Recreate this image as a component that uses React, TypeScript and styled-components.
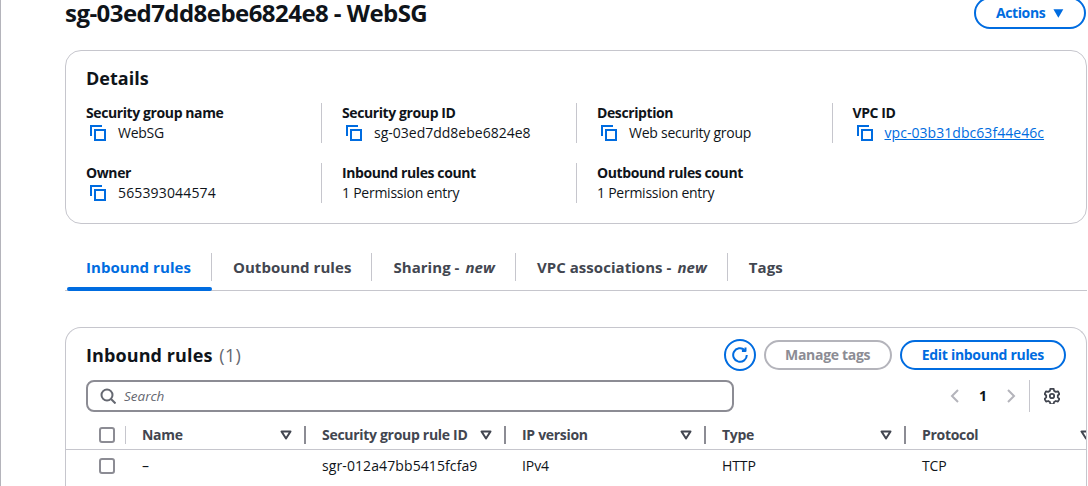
import React from "react"
import styled, {createGlobalStyle} from "styled-components"

const GlobalStyle = createGlobalStyle`
  html, body {
    margin: 0;
    padding: 0;
    background: #fff;
    overflow: hidden;
  }
  * { box-sizing: border-box; }
`

const BLUE = "#006ce0"
const INK = "#0f141a"
const GREY_INK = "#424650"

const Page = styled.div`
  width: 1088px;
  height: 486px;
  overflow: hidden;
  border-left: 1px solid #b4b4bb;
  padding: 0 1px 0 64px;
  font-family: "Open Sans", "Noto Sans", sans-serif;
  font-size: 14px;
  line-height: 20px;
  color: ${INK};
  display: flex;
  flex-direction: column;
`
const Header = styled.div`
  display: flex;
  justify-content: space-between;
  align-items: center;
  height: 32px;
  margin-top: -3px;
  flex: none;
`
const Title = styled.h1`
  margin: 0;
  font-size: 24px;
  line-height: 24px;
  font-weight: 700;
  letter-spacing: -0.55px;
`
const PillButton = styled.button<{$disabled?: boolean}>`
  height: 30px;
  padding: 0 ${({$disabled}) => $disabled ? "19.5px" : "20px"};
  border-radius: 15px;
  border: 2px solid ${({$disabled}) => $disabled ? "#b4b4bb" : BLUE};
  background: #fff;
  color: ${({$disabled}) => $disabled ? "#8c8c94" : BLUE};
  font: 700 14px/20px "Open Sans", sans-serif;
  letter-spacing: -0.3px;
  display: flex;
  align-items: center;
  gap: 8px;
  white-space: nowrap;
`
const ActionsButton = styled(PillButton)`
  height: 32px;
  border-radius: 16px;
  width: 112px;
  margin-right: 1px;
  justify-content: center;
  letter-spacing: -0.4px;
`
const Card = styled.section`
  border: 1px solid #c6c6cd;
  border-radius: 16px;
  background: #fff;
  flex: none;
`
const DetailsCard = styled(Card)`
  margin-top: 21px;
  height: 174px;
  padding: 15px 20px 0;
`
const CardTitle = styled.h2`
  margin: 0;
  font-size: 18px;
  line-height: 24px;
  font-weight: 700;
`
const RulesTitle = styled(CardTitle)`
  letter-spacing: 0.1px;
  margin-top: -1px;
`
const DetailGrid = styled.div`
  margin-top: 13px;
  display: grid;
  grid-template-columns: 235px 255px 255.5px 1fr;
  grid-auto-rows: 40px;
  row-gap: 20px;
`
const DetailCell = styled.div<{$first?: boolean}>`
  ${({$first}) => $first ? "" : "border-left: 1px solid #c6c6cd; padding-left: 20px;"}
`
const Label = styled.div`
  font-weight: 700;
  letter-spacing: -0.4px;
  white-space: nowrap;
`
const Value = styled.div<{$spacing?: number}>`
  display: flex;
  align-items: center;
  gap: 12px;
  letter-spacing: ${({$spacing}) => $spacing ?? -0.25}px;
  white-space: nowrap;
`
const CopyWrap = styled.span`
  display: inline-flex;
  width: 20px;
  justify-content: flex-end;
  color: ${BLUE};
`
const ValueLink = styled.a`
  color: ${BLUE};
  text-decoration: underline;
`
const Tabs = styled.nav`
  margin-top: 21px;
  height: 46px;
  display: flex;
  align-items: stretch;
  border-bottom: 1px solid #c6c6cd;
  flex: none;
`
const Tab = styled.div<{$active?: boolean}>`
  position: relative;
  display: flex;
  align-items: center;
  height: 45px;
  padding: 0 21px 2px;
  font-size: 15px;
  font-weight: 700;
  letter-spacing: 0.05px;
  white-space: nowrap;
  color: ${({$active}) => $active ? BLUE : GREY_INK};
  &::after {
    content: "";
    position: absolute;
    right: 0;
    top: 8px;
    bottom: 9px;
    width: 1px;
    background: #c6c6cd;
  }
  &:last-child::after { display: none; }
  ${({$active}) => $active ? `
    &::before {
      content: "";
      position: absolute;
      left: 2px;
      right: 0;
      bottom: -1px;
      height: 4px;
      border-radius: 2px;
      background: ${BLUE};
    }
  ` : ""}
`
const New = styled.em`
  font-weight: 700;
  margin-left: 6px;
`
const RulesCard = styled(Card)`
  margin-top: 36px;
  height: 200px;
  padding: 11px 0 0;
  border-bottom: none;
  border-radius: 16px 16px 0 0;
  overflow: hidden;
`
const RulesHead = styled.div`
  display: flex;
  align-items: center;
  justify-content: space-between;
  padding: 0 20px;
  height: 32px;
`
const Count = styled.span`
  font-weight: 400;
  color: #656871;
  margin-left: 2px;
  letter-spacing: 0.4px;
`
const Actions = styled.div`
  display: flex;
  align-items: center;
  gap: 8px;
`
const RoundButton = styled.button`
  width: 32px;
  height: 32px;
  padding: 0;
  border: 2px solid ${BLUE};
  border-radius: 50%;
  background: #fff;
  color: ${BLUE};
  display: flex;
  align-items: center;
  justify-content: center;
`
const Toolbar = styled.div`
  margin-top: 9px;
  padding-left: 20px;
  height: 32px;
  display: flex;
  align-items: center;
`
const SearchBox = styled.div`
  width: 648px;
  height: 32px;
  border: 2px solid #8c8c94;
  border-radius: 8px;
  display: flex;
  align-items: center;
  gap: 8px;
  padding-left: 12px;
  color: #656871;
`
const SearchText = styled.span`
  font-size: 13.5px;
  font-style: italic;
`
const Pager = styled.div`
  margin-left: auto;
  margin-right: 26px;
  height: 32px;
  display: flex;
  align-items: center;
  color: #b4b4bb;
`
const PageNumber = styled.span`
  width: 46px;
  text-align: center;
  color: ${INK};
  font-weight: 700;
`
const PrefsButton = styled.div`
  height: 32px;
  margin-left: 13px;
  padding-left: 14px;
  border-left: 1px solid #c6c6cd;
  display: flex;
  align-items: center;
  color: ${GREY_INK};
`
const Row = styled.div<{$head?: boolean}>`
  display: grid;
  grid-template-columns: 60px 180px 200px 200px 200px 200px;
  width: 1040px;
  height: ${({$head}) => $head ? "29px" : "32px"};
  align-items: center;
  ${({$head}) => $head ? "margin-top: 8px; border-bottom: 1px solid #c6c6cd; height: 30px;" : ""}
`
const CheckCell = styled.div`
  padding-left: 33px;
  display: flex;
  align-items: center;
`
const CheckBox = styled.span`
  width: 16px;
  height: 16px;
  border: 2px solid #8c8c94;
  border-radius: 3px;
  flex: none;
`
const CheckDivider = styled.span`
  width: 1px;
  height: 18px;
  background: #c6c6cd;
  margin-left: 10px;
`
const HeadCell = styled.div`
  height: 18px;
  display: flex;
  align-items: center;
  justify-content: space-between;
  font-weight: 700;
  letter-spacing: -0.3px;
  color: ${GREY_INK};
  white-space: nowrap;
  padding-left: 16px;
`
const SortGroup = styled.span`
  display: flex;
  align-items: center;
  gap: 12px;
  color: ${GREY_INK};
`
const SortDivider = styled.span<{$hidden?: boolean}>`
  width: 2px;
  height: 18px;
  background: ${({$hidden}) => $hidden ? "transparent" : "#8c8c94"};
`
const Cell = styled.div<{$spacing?: number}>`
  padding-left: 16px;
  letter-spacing: ${({$spacing}) => $spacing ?? -0.1}px;
  white-space: nowrap;
`

const CopyIcon = () => (
    <CopyWrap>
        <svg width="16" height="16" viewBox="0 0 16 16" fill="none" stroke="currentColor" strokeWidth="2">
            <rect x="5" y="5" width="10" height="10"/>
            <path d="M1 11V1h11" strokeWidth="2"/>
        </svg>
    </CopyWrap>
)
const CaretDown = () => (
    <svg width="13" height="11" viewBox="0 0 13 11"><path d="M0.5 0.5h12L6.5 10.5z" fill="currentColor"/></svg>
)
const SortIcon = () => (
    <svg width="12" height="10" viewBox="0 0 12 10" fill="none" stroke="currentColor" strokeWidth="2" strokeLinejoin="round">
        <path d="M1.5 1.5h9L6 8.5z"/>
    </svg>
)
const RefreshIcon = () => (
    <svg width="16" height="16" viewBox="0 0 16 16" fill="none" stroke="currentColor" strokeWidth="2">
        <path d="M14.8 8A6.8 6.8 0 1 1 12.6 3"/>
        <path d="M13.5 0.5v3.6H9.9" strokeLinejoin="round"/>
    </svg>
)
const SearchIcon = () => (
    <svg width="16" height="16" viewBox="0 0 16 16" fill="none" stroke="currentColor" strokeWidth="2">
        <circle cx="7" cy="7" r="5.5"/>
        <path d="M11 11l4.5 4.5"/>
    </svg>
)
const Chevron = ({flip}: {flip?: boolean}) => (
    <svg width="10" height="14" viewBox="0 0 10 14" fill="none" stroke="currentColor" strokeWidth="2">
        <path d={flip ? "M2 1l6 6-6 6" : "M8 1L2 7l6 6"}/>
    </svg>
)
const GearIcon = () => (
    <svg width="16" height="16" viewBox="0 0 16 16" fill="none" stroke="currentColor" strokeWidth="1.8" strokeLinejoin="round">
        <path d="M6.4 1h3.2l.5 2.1 1.7 1 2.1-.6 1.5 2.7-1.6 1.5v1.9l1.6 1.5-1.5 2.7-2.1-.6-1.7 1-.5 2.1H6.4l-.5-2.1-1.7-1-2.1.6L.6 11.1l1.6-1.5V7.7L.6 6.2l1.5-2.7 2.1.6 1.7-1z" transform="translate(0 -.2)"/>
        <circle cx="8" cy="8" r="2.2"/>
    </svg>
)

const HeadColumn = ({title, last}: {title: string, last?: boolean}) => (
    <HeadCell>
        <span>{title}</span>
        <SortGroup>
            <SortIcon/>
            <SortDivider $hidden={last}/>
        </SortGroup>
    </HeadCell>
)

export default function App() {
    return <Page>
        <GlobalStyle/>
        <Header>
            <Title>sg-03ed7dd8ebe6824e8 - WebSG</Title>
            <ActionsButton>Actions <CaretDown/></ActionsButton>
        </Header>

        <DetailsCard>
            <CardTitle>Details</CardTitle>
            <DetailGrid>
                <DetailCell $first>
                    <Label>Security group name</Label>
                    <Value><CopyIcon/>WebSG</Value>
                </DetailCell>
                <DetailCell>
                    <Label>Security group ID</Label>
                    <Value $spacing={0}><CopyIcon/>sg-03ed7dd8ebe6824e8</Value>
                </DetailCell>
                <DetailCell>
                    <Label>Description</Label>
                    <Value><CopyIcon/>Web security group</Value>
                </DetailCell>
                <DetailCell>
                    <Label>VPC ID</Label>
                    <Value $spacing={0.05}><CopyIcon/><ValueLink>vpc-03b31dbc63f44e46c</ValueLink></Value>
                </DetailCell>
                <DetailCell $first>
                    <Label>Owner</Label>
                    <Value $spacing={0.15}><CopyIcon/>565393044574</Value>
                </DetailCell>
                <DetailCell>
                    <Label>Inbound rules count</Label>
                    <Value>1 Permission entry</Value>
                </DetailCell>
                <DetailCell>
                    <Label>Outbound rules count</Label>
                    <Value>1 Permission entry</Value>
                </DetailCell>
            </DetailGrid>
        </DetailsCard>

        <Tabs>
            <Tab $active>Inbound rules</Tab>
            <Tab>Outbound rules</Tab>
            <Tab>Sharing - <New>new</New></Tab>
            <Tab>VPC associations - <New>new</New></Tab>
            <Tab>Tags</Tab>
        </Tabs>

        <RulesCard>
            <RulesHead>
                <RulesTitle>Inbound rules <Count>(1)</Count></RulesTitle>
                <Actions>
                    <RoundButton><RefreshIcon/></RoundButton>
                    <PillButton $disabled>Manage tags</PillButton>
                    <PillButton>Edit inbound rules</PillButton>
                </Actions>
            </RulesHead>
            <Toolbar>
                <SearchBox><SearchIcon/><SearchText>Search</SearchText></SearchBox>
                <Pager>
                    <Chevron/>
                    <PageNumber>1</PageNumber>
                    <Chevron flip/>
                    <PrefsButton><GearIcon/></PrefsButton>
                </Pager>
            </Toolbar>
            <Row $head>
                <CheckCell><CheckBox/><CheckDivider/></CheckCell>
                <HeadColumn title="Name"/>
                <HeadColumn title="Security group rule ID"/>
                <HeadColumn title="IP version"/>
                <HeadColumn title="Type"/>
                <HeadColumn title="Protocol" last/>
            </Row>
            <Row>
                <CheckCell><CheckBox/></CheckCell>
                <Cell>–</Cell>
                <Cell $spacing={0.1}>sgr-012a47bb5415fcfa9</Cell>
                <Cell>IPv4</Cell>
                <Cell>HTTP</Cell>
                <Cell>TCP</Cell>
            </Row>
        </RulesCard>
    </Page>
}
